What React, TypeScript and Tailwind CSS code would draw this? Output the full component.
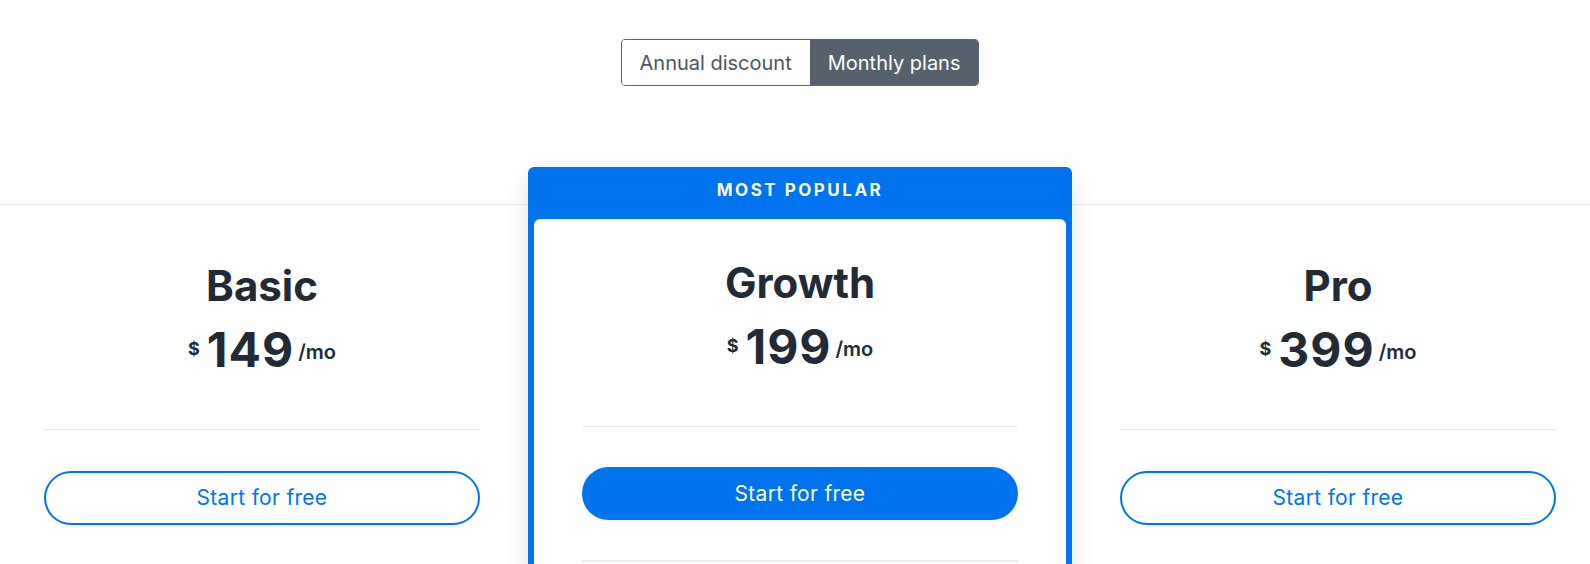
import React from "react";

function Price({ amount }: { amount: string }) {
  return (
    <div className="flex items-start justify-center text-[#212a35]">
      <span className="text-[18px] font-bold leading-none mt-[14px] mr-[7px]">$</span>
      <span className="text-[48px] font-bold leading-none tracking-[1px]">{amount}</span>
      <span className="text-[20px] font-semibold leading-none mt-[16px] ml-[4px]">/mo</span>
    </div>
  );
}

function PlanBody({ name, amount, filled }: { name: string; amount: string; filled?: boolean }) {
  return (
    <div className="flex flex-col">
      <h2 className="text-center text-[42px] font-bold leading-none text-[#212a35]">{name}</h2>
      <div className="mt-[19px]">
        <Price amount={amount} />
      </div>
      <div className="mt-[55px] h-px bg-[#e3e7eb]" />
      <button
        className={
          filled
            ? "mt-[40px] h-[53px] rounded-full bg-[#0073ee] text-[21px] tracking-[0.3px] text-white"
            : "mt-[41px] h-[54px] rounded-full border-2 border-[#0073ee] bg-white text-[21px] tracking-[0.3px] text-[#0073ee]"
        }
      >
        Start for free
      </button>
    </div>
  );
}

export default function App() {
  return (
    <div className="h-[564px] w-[1590px] overflow-hidden bg-white font-['Inter',sans-serif]">
      <div className="flex justify-center pl-[10px] pt-[39px]">
        <div className="flex h-[47px] overflow-hidden rounded-[4px] border border-[#5a6570]">
          <button className="bg-white px-[18px] text-[20px] text-[#4b5662]">Annual discount</button>
          <button className="bg-[#55616c] px-[18px] text-[20px] text-white">Monthly plans</button>
        </div>
      </div>

      <div className="mt-[118px] border-t border-[#e9ecef]">
        <div className="flex items-start gap-[48px] pl-[44px]">
          <div className="w-[436px] pt-[60px]">
            <PlanBody name="Basic" amount="149" />
          </div>

          <div className="-mt-[38px] w-[544px] rounded-t-[6px] bg-[#0073ee] px-[6px] shadow-[0_6px_24px_rgba(15,23,42,0.10)]">
            <div className="flex h-[52px] items-center justify-center pb-[4px] text-[17px] font-bold tracking-[2.5px] text-white">
              MOST POPULAR
            </div>
            <div className="rounded-t-[6px] bg-white px-[48px] pb-[200px] pt-[43px]">
              <PlanBody name="Growth" amount="199" filled />
              <div className="mt-[40px] h-[2px] bg-[#eceff2]" />
            </div>
          </div>

          <div className="w-[436px] pt-[60px]">
            <PlanBody name="Pro" amount="399" />
          </div>
        </div>
      </div>
    </div>
  );
}
